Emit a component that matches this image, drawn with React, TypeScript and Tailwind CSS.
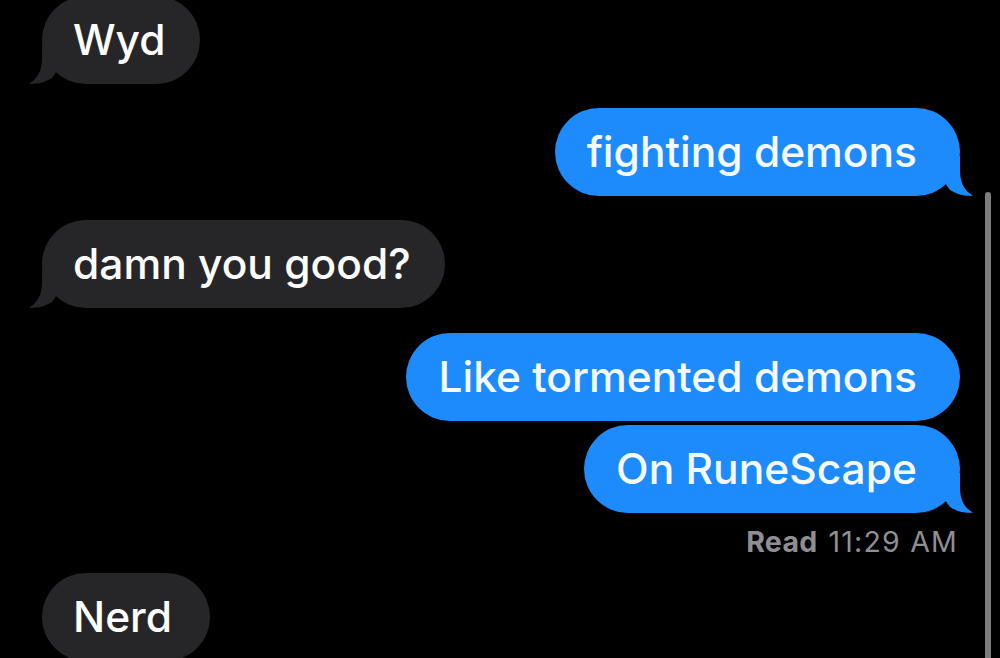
import React from "react";

type Msg = {
  text: string;
  from: "me" | "them";
  tail: boolean;
  mt: string;
};

const messages: Msg[] = [
  { text: "Wyd", from: "them", tail: true, mt: "-mt-[4px]" },
  { text: "fighting demons", from: "me", tail: true, mt: "mt-[24px]" },
  { text: "damn you good?", from: "them", tail: true, mt: "mt-[24px]" },
  { text: "Like tormented demons", from: "me", tail: false, mt: "mt-[25px]" },
  { text: "On RuneScape", from: "me", tail: true, mt: "mt-[4px]" },
];

function Tail({ color, side }: { color: string; side: "left" | "right" }) {
  return (
    <svg
      width="40"
      height="40"
      viewBox="0 0 40 40"
      className={
        side === "right"
          ? "absolute -right-[14px] bottom-0"
          : "absolute -left-[14px] bottom-0 -scale-x-100"
      }
    >
      <path
        d="M6 0 L26 0 L26 14 C26 26 30 35 39 39.5 C32 40.5 24 39 16 34 L6 20 Z"
        fill={color}
      />
    </svg>
  );
}

function Bubble({ msg }: { msg: Msg }) {
  const me = msg.from === "me";
  const color = me ? "#1e8bfd" : "#262628";
  return (
    <div className={`flex ${me ? "justify-end" : "justify-start"} ${msg.mt}`}>
      <div
        className={`relative rounded-[44px] py-[19px] text-[42.5px] font-medium leading-[50px] ${
          me
            ? "bg-[#1e8bfd] text-[#f4faff] pl-[32px] pr-[43px]"
            : "bg-[#262628] text-white pl-[31px] pr-[34px]"
        }`}
      >
        {msg.tail && <Tail color={color} side={me ? "right" : "left"} />}
        <span className="relative">{msg.text}</span>
      </div>
    </div>
  );
}

export default function App() {
  return (
    <div
      className="relative h-[658px] w-[1000px] overflow-hidden bg-black pl-[42px] pr-[40px]"
      style={{ fontFamily: "Inter, 'Noto Sans', sans-serif" }}
    >
      {messages.map((m, i) => (
        <Bubble key={i} msg={m} />
      ))}

      <div className="mt-[13px] flex justify-end pr-[2px] text-[28.5px] leading-[32px] text-[#8f8f93]">
        <span className="font-bold tracking-[0.3px]">Read</span>
        <span className="ml-[11px] tracking-[1.2px]">11:29 AM</span>
      </div>

      <div className="mt-[15px] flex justify-start">
        <div className="relative rounded-[44px] bg-[#262628] py-[19px] pl-[31px] pr-[38px] text-[42.5px] font-medium leading-[50px] text-white">
          <span className="relative">Nerd</span>
        </div>
      </div>

      {/* scroll indicator */}
      <div className="absolute left-[985px] top-[192px] h-[500px] w-[6px] rounded-full bg-[#7c7c7c]" />
    </div>
  );
}
